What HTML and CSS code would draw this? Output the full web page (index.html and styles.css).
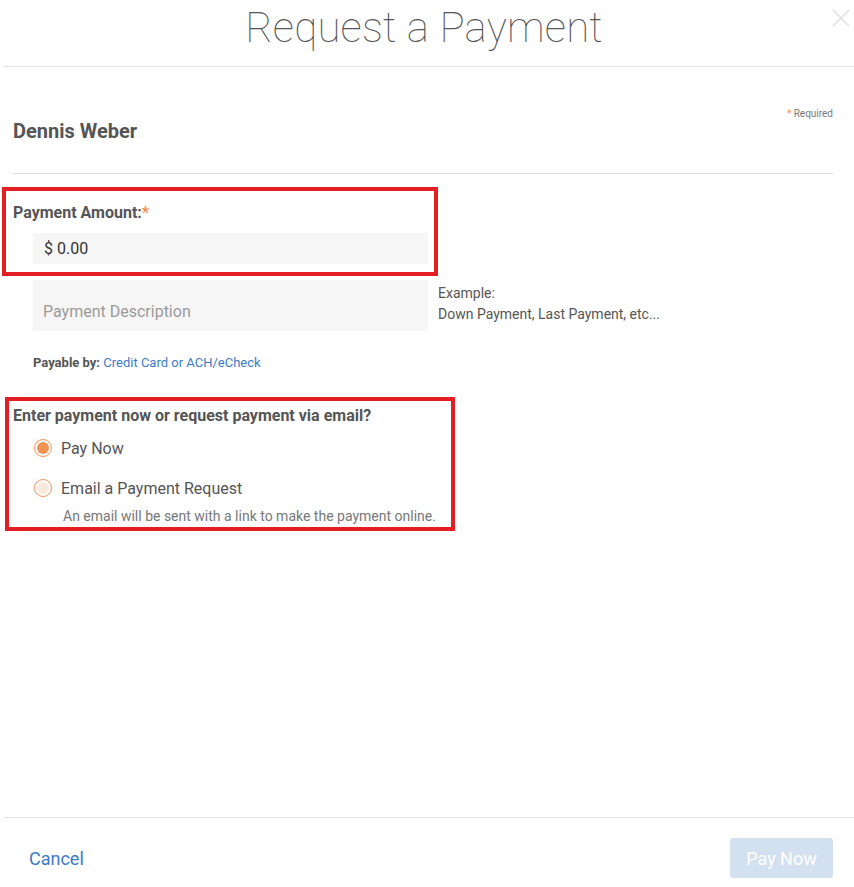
FILE: index.html
```html
<!DOCTYPE html>
<html lang="en">
<head>
<meta charset="UTF-8">
<meta name="viewport" content="width=device-width, initial-scale=1.0">
<title>Request a Payment</title>
<link rel="stylesheet" href="styles.css">
</head>
<body>

<div class="modal">
    <div class="modal-header">
        <h1>Request a Payment</h1>
        <svg class="close" width="18" height="18" viewBox="0 0 18 18">
            <path d="M1 1 L17 17 M17 1 L1 17" stroke="#DDDDDD" stroke-width="1.4" fill="none"/>
        </svg>
    </div>

    <div class="modal-body">
        <div class="required"><span class="star">*</span> Required</div>
        <div class="client-name">Dennis Weber</div>

        <div class="field-label">Payment Amount:<span class="star">*</span></div>
        <div class="amount-input">$ 0.00</div>

        <div class="desc-row">
            <div class="desc-input">Payment Description</div>
            <div class="example">Example:<br>Down Payment, Last Payment, etc...</div>
        </div>

        <div class="payable">Payable by: <a href="#">Credit Card or ACH/eCheck</a></div>

        <div class="question">Enter payment now or request payment via email?</div>
        <label class="radio-row">
            <span class="radio checked"></span>
            Pay Now
        </label>
        <label class="radio-row second">
            <span class="radio"></span>
            Email a Payment Request
        </label>
        <div class="note">An email will be sent with a link to make the payment online.</div>
    </div>

    <div class="modal-footer">
        <a href="#" class="cancel">Cancel</a>
        <button class="pay-btn" disabled>Pay Now</button>
    </div>

    <!-- highlight marks -->
    <div class="mark mark-amount"></div>
    <div class="mark mark-choice"></div>
</div>

</body>
</html>
```

FILE: styles.css
```css
/* Modal layout */
body {
    margin: 0;
    background-color: #FFFFFF;
    font-family: 'Roboto', sans-serif;
    color: #555555;
}
.modal {
    position: relative;
    margin-left: 4px;
    height: 887px;
    display: flex;
    flex-direction: column;
}
.modal-header {
    position: relative;
    height: 66px;
    border-bottom: 1px solid #E2E2E2;
    display: flex;
    justify-content: center;
    align-items: center;
}
.modal-header h1 {
    margin: 0 10px 12px 0;
    font-size: 42px;
    font-weight: 100;
    color: #555555;
    letter-spacing: 0.2px;
}
.close {
    position: absolute;
    right: 4px;
    top: 9px;
}
/* Body */
.modal-body {
    flex: 1;
    padding: 0 21px 0 9px;
}
.required {
    margin-top: 41px;
    text-align: right;
    font-size: 10px;
    line-height: 12px;
    color: #777777;
}
.star {
    color: #F28C4B;
}
.client-name {
    margin-top: 0;
    padding-bottom: 31px;
    border-bottom: 1px solid #DDDDDD;
    font-size: 20px;
    font-weight: 700;
    line-height: 22px;
}
.field-label {
    margin-top: 30px;
    font-size: 16px;
    font-weight: 700;
    line-height: 18px;
}
.amount-input {
    margin: 11px 0 0 20px;
    width: 384px;
    height: 31px;
    padding-left: 11px;
    background-color: #F6F6F6;
    font-size: 16px;
    line-height: 31px;
    color: #333333;
}
.desc-row {
    display: flex;
    align-items: flex-start;
    margin: 16px 0 0 20px;
}
.desc-input {
    width: 385px;
    height: 51px;
    padding-left: 10px;
    background-color: #F6F6F6;
    font-size: 16px;
    line-height: 63px;
    color: #9A9A9A;
}
.example {
    margin-left: 10px;
    padding-top: 3px;
    font-size: 14px;
    line-height: 21px;
}
.payable {
    margin: 24px 0 0 20px;
    font-size: 13px;
    font-weight: 700;
    line-height: 16px;
}
.payable a {
    font-weight: 400;
    color: #3B7BC8;
    text-decoration: none;
}
.question {
    margin-top: 36px;
    font-size: 16px;
    font-weight: 700;
    line-height: 18px;
}
.radio-row {
    display: flex;
    align-items: center;
    margin: 13px 0 0 21px;
    height: 20px;
    font-size: 16px;
    color: #555555;
}
.radio-row.second {
    margin-top: 20px;
}
.radio {
    box-sizing: border-box;
    width: 18px;
    height: 18px;
    margin-right: 9px;
    border: 1.5px solid #F09455;
    border-radius: 50%;
    background-color: #FCE9DD;
    background-clip: content-box;
    padding: 2px;
}
.radio.checked {
    background-color: #F09455;
}
.note {
    margin: 10px 0 0 50px;
    font-size: 14px;
    line-height: 16px;
    color: #777777;
}
/* Footer */
.modal-footer {
    display: flex;
    justify-content: space-between;
    align-items: center;
    border-top: 1px solid #E2E2E2;
    padding: 20px 21px 9px 25px;
}
.cancel {
    font-size: 18px;
    color: #3B7BC8;
    text-decoration: none;
}
.pay-btn {
    width: 103px;
    height: 40px;
    border: none;
    border-radius: 3px;
    background-color: #D2E0EF;
    color: #FFFFFF;
    font-family: 'Roboto', sans-serif;
    font-size: 18px;
}
/* Red highlight marks */
.mark {
    position: absolute;
    border: 4px solid #E41E25;
}
.mark-amount {
    left: -2px;
    top: 187px;
    width: 428px;
    height: 81px;
}
.mark-choice {
    left: 1px;
    top: 397px;
    width: 442px;
    height: 126px;
}
```
